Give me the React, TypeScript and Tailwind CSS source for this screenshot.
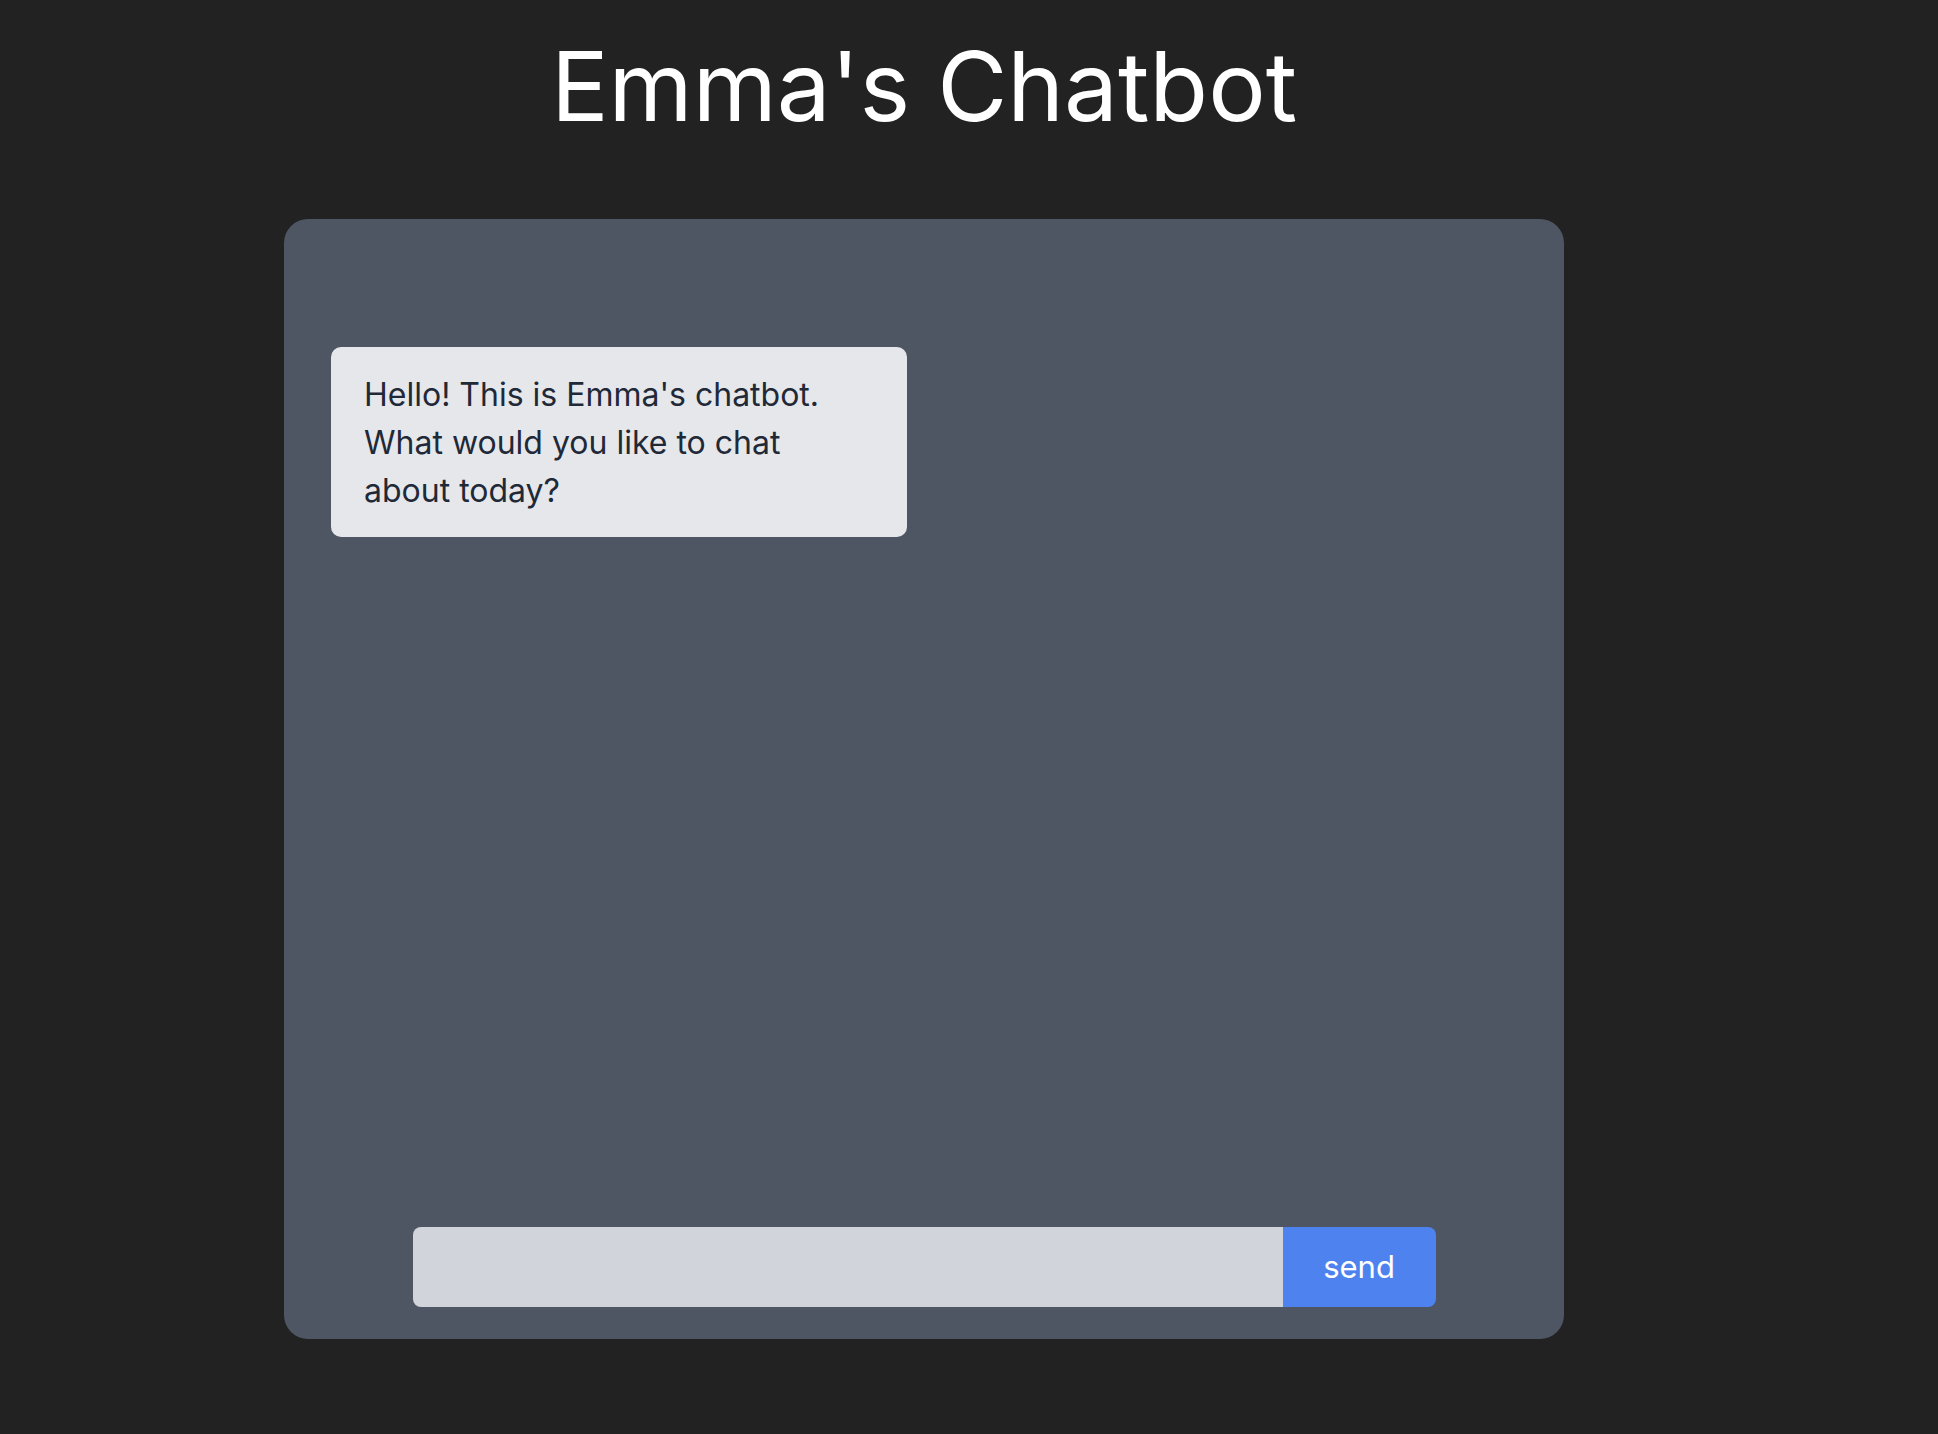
import React from "react";

export default function App() {
  return (
    <div
      className="min-h-screen w-full bg-[#222222]"
      style={{ fontFamily: "Inter, 'Noto Sans', sans-serif" }}
    >
      <div className="flex w-[1848px] flex-col items-center">
        <h1 className="mt-[38px] text-[96px] font-normal leading-[96px] text-white">
          Emma's Chatbot
        </h1>
        <div className="mt-[85px] flex h-[1120px] w-[1280px] flex-col justify-between rounded-[24px] bg-[#4e5563]">
          <div className="pl-[47px] pt-[128px]">
            <div className="w-[576px] rounded-[10px] bg-[#e5e7eb] pb-[22px] pl-[33px] pr-[66px] pt-[24px] text-[32px] leading-[48px] text-[#1f2937]">
              Hello! This is Emma's chatbot. What would you like to chat about today?
            </div>
          </div>
          <div className="flex justify-center pb-[32px]">
            <div className="flex h-[80px] w-[1023px]">
              <input
                type="text"
                className="h-full flex-1 rounded-l-[8px] bg-[#d1d5db] px-4 text-[30px] text-[#1f2937] outline-none"
              />
              <button className="h-full w-[153px] rounded-r-[8px] bg-[#4e82ee] text-[31px] text-white">
                send
              </button>
            </div>
          </div>
        </div>
      </div>
    </div>
  );
}
